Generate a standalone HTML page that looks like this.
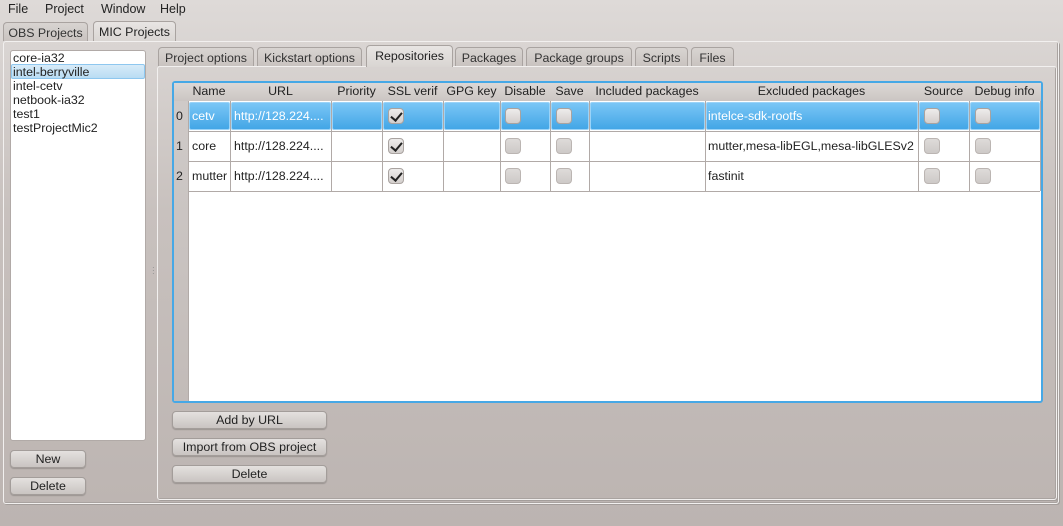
<!DOCTYPE html>
<html><head><style>
*{box-sizing:border-box;margin:0;padding:0}
body{width:1063px;height:526px;overflow:hidden;position:relative;font-family:"Liberation Sans","DejaVu Sans",sans-serif;font-size:12.4px;color:#222;background:linear-gradient(#dedad8,#c8c1be 40%,#bcb4b1);}
.a{position:absolute}
.menu span{position:absolute;top:2px;font-size:12.5px}
.tab{position:absolute;border:1px solid #a9a3a0;border-bottom:none;border-radius:4px 4px 0 0;background:linear-gradient(#d8d4d1,#c9c3c0);text-align:center;font-size:12.4px;padding-top:3px;color:#333}
.tab.act{background:linear-gradient(#e8e5e3,#d9d5d2);color:#222}
.pane{position:absolute;border:1px solid #f2f0ef;box-shadow:inset -1px -1px 0 #a9a3a0, 1px 1px 0 #a39d9a;border-radius:3px}
.btn{position:absolute;border:1px solid #a39d9a;border-radius:4px;background:linear-gradient(#e4e1df,#c9c4c1);text-align:center;font-size:12.4px;line-height:16px;box-shadow:0 1px 1px #9a9491}
.li{position:absolute;left:13px;font-size:12.4px}
.hd{position:absolute;top:84px;font-size:12.4px;text-align:center;color:#222}
.vl{position:absolute;width:1px;background:#b1aaa7;top:101px;height:90px}
.hl{position:absolute;height:1px;background:#b1aaa7;left:188px;width:852px}
.c{position:absolute;font-size:12.4px}
.cb{position:absolute;width:16px;height:16px;border:1px solid #a9a3a0;border-radius:4px;background:linear-gradient(#eeeceb,#d3cfcd)}
.cb.d{background:linear-gradient(#dedbd9,#cdc9c7);border-color:#bbb5b2}
.ck::after{content:"";position:absolute;left:4px;top:1px;width:5px;height:9px;border:solid #222;border-width:0 2px 2px 0;transform:rotate(40deg)}
.sel{position:absolute;top:102px;height:28px;background:linear-gradient(#7ac6f6,#43a6e6);border:1px solid #9ad3f8;border-radius:2px}
</style></head><body>
<div class="menu"><span style="left:8px">File</span><span style="left:45px">Project</span><span style="left:101px">Window</span><span style="left:160px">Help</span></div>
<div class="tab" style="left:3px;top:22px;width:85px;height:19px">OBS Projects</div>
<div class="tab act" style="left:93px;top:21px;width:83px;height:21px">MIC Projects</div>
<div class="pane" style="left:3px;top:41px;width:1056px;height:463px"></div>
<div class="a" style="left:10px;top:50px;width:136px;height:391px;background:#fff;border:1px solid #b1aaa7;border-radius:3px"></div>
<div class="a" style="left:11px;top:64px;width:134px;height:15px;background:linear-gradient(#d7ebf8,#b9dcf3);border:1px solid #8ec7ef;border-radius:2px"></div>
<div class="li" style="top:51px">core-ia32</div>
<div class="li" style="top:65px">intel-berryville</div>
<div class="li" style="top:79px">intel-cetv</div>
<div class="li" style="top:93px">netbook-ia32</div>
<div class="li" style="top:107px">test1</div>
<div class="li" style="top:121px">testProjectMic2</div>
<div class="btn" style="left:10px;top:450px;width:76px;height:18px">New</div>
<div class="btn" style="left:10px;top:477px;width:76px;height:18px">Delete</div>
<div class="a" style="left:152px;top:266px;color:#888;font-size:8px;line-height:3px">·<br>·<br>·</div>

<div class="pane" style="left:157px;top:66px;width:900px;height:434px"></div>
<div class="tab" style="left:158px;top:47px;width:96px;height:19px">Project options</div>
<div class="tab" style="left:257px;top:47px;width:105px;height:19px">Kickstart options</div>
<div class="tab act" style="left:366px;top:45px;width:87px;height:22px">Repositories</div>
<div class="tab" style="left:455px;top:47px;width:68px;height:19px">Packages</div>
<div class="tab" style="left:526px;top:47px;width:106px;height:19px">Package groups</div>
<div class="tab" style="left:635px;top:47px;width:53px;height:19px">Scripts</div>
<div class="tab" style="left:691px;top:47px;width:43px;height:19px">Files</div>

<div class="a" style="left:172px;top:81px;width:871px;height:322px;border:2px solid #46a8e6;border-radius:3px;background:#fff"></div>
<div class="a" style="left:174px;top:83px;width:867px;height:18px;background:linear-gradient(#dcd8d6,#cbc5c2)"></div>
<div class="a" style="left:174px;top:101px;width:14px;height:300px;background:linear-gradient(#cfcac8,#c2bbb8)"></div>
<div class="a" style="left:188px;top:101px;width:1px;height:300px;background:#b1aaa7"></div>
<div class="hd" style="left:188px;width:42px">Name</div>
<div class="hd" style="left:230px;width:101px">URL</div>
<div class="hd" style="left:331px;width:51px">Priority</div>
<div class="hd" style="left:382px;width:61px">SSL verif</div>
<div class="hd" style="left:443px;width:57px">GPG key</div>
<div class="hd" style="left:500px;width:50px">Disable</div>
<div class="hd" style="left:550px;width:39px">Save</div>
<div class="hd" style="left:589px;width:116px">Included packages</div>
<div class="hd" style="left:705px;width:213px">Excluded packages</div>
<div class="hd" style="left:918px;width:51px">Source</div>
<div class="hd" style="left:969px;width:71px">Debug info</div>

<div class="hl" style="top:131px"></div><div class="hl" style="top:161px"></div><div class="hl" style="top:191px"></div>
<div class="vl" style="left:230px"></div><div class="vl" style="left:331px"></div><div class="vl" style="left:382px"></div><div class="vl" style="left:443px"></div><div class="vl" style="left:500px"></div><div class="vl" style="left:550px"></div><div class="vl" style="left:589px"></div><div class="vl" style="left:705px"></div><div class="vl" style="left:918px"></div><div class="vl" style="left:969px"></div><div class="vl" style="left:1040px"></div>

<div class="sel" style="left:189px;width:41px"></div>
<div class="sel" style="left:231px;width:100px"></div>
<div class="sel" style="left:332px;width:50px"></div>
<div class="sel" style="left:383px;width:60px"></div>
<div class="sel" style="left:444px;width:56px"></div>
<div class="sel" style="left:501px;width:49px"></div>
<div class="sel" style="left:551px;width:38px"></div>
<div class="sel" style="left:590px;width:115px"></div>
<div class="sel" style="left:706px;width:212px"></div>
<div class="sel" style="left:919px;width:50px"></div>
<div class="sel" style="left:970px;width:70px"></div>

<div class="c" style="left:176px;top:109px">0</div><div class="c" style="left:176px;top:139px">1</div><div class="c" style="left:176px;top:169px">2</div>
<div class="c" style="left:192px;top:109px;color:#fff">cetv</div>
<div class="c" style="left:234px;top:109px;color:#fff">http://128.224....</div>
<div class="c" style="left:708px;top:109px;color:#fff">intelce-sdk-rootfs</div>
<div class="c" style="left:192px;top:139px">core</div>
<div class="c" style="left:234px;top:139px">http://128.224....</div>
<div class="c" style="left:708px;top:139px">mutter,mesa-libEGL,mesa-libGLESv2</div>
<div class="c" style="left:192px;top:169px">mutter</div>
<div class="c" style="left:234px;top:169px">http://128.224....</div>
<div class="c" style="left:708px;top:169px">fastinit</div>

<div class="cb ck" style="left:388px;top:108px"></div>
<div class="cb ck" style="left:388px;top:138px"></div>
<div class="cb ck" style="left:388px;top:168px"></div>
<div class="cb" style="left:505px;top:108px"></div><div class="cb" style="left:556px;top:108px"></div><div class="cb" style="left:924px;top:108px"></div><div class="cb" style="left:975px;top:108px"></div>
<div class="cb d" style="left:505px;top:138px"></div><div class="cb d" style="left:556px;top:138px"></div><div class="cb d" style="left:924px;top:138px"></div><div class="cb d" style="left:975px;top:138px"></div>
<div class="cb d" style="left:505px;top:168px"></div><div class="cb d" style="left:556px;top:168px"></div><div class="cb d" style="left:924px;top:168px"></div><div class="cb d" style="left:975px;top:168px"></div>

<div class="btn" style="left:172px;top:411px;width:155px;height:18px">Add by URL</div>
<div class="btn" style="left:172px;top:438px;width:155px;height:18px">Import from OBS project</div>
<div class="btn" style="left:172px;top:465px;width:155px;height:18px">Delete</div>
</body></html>
